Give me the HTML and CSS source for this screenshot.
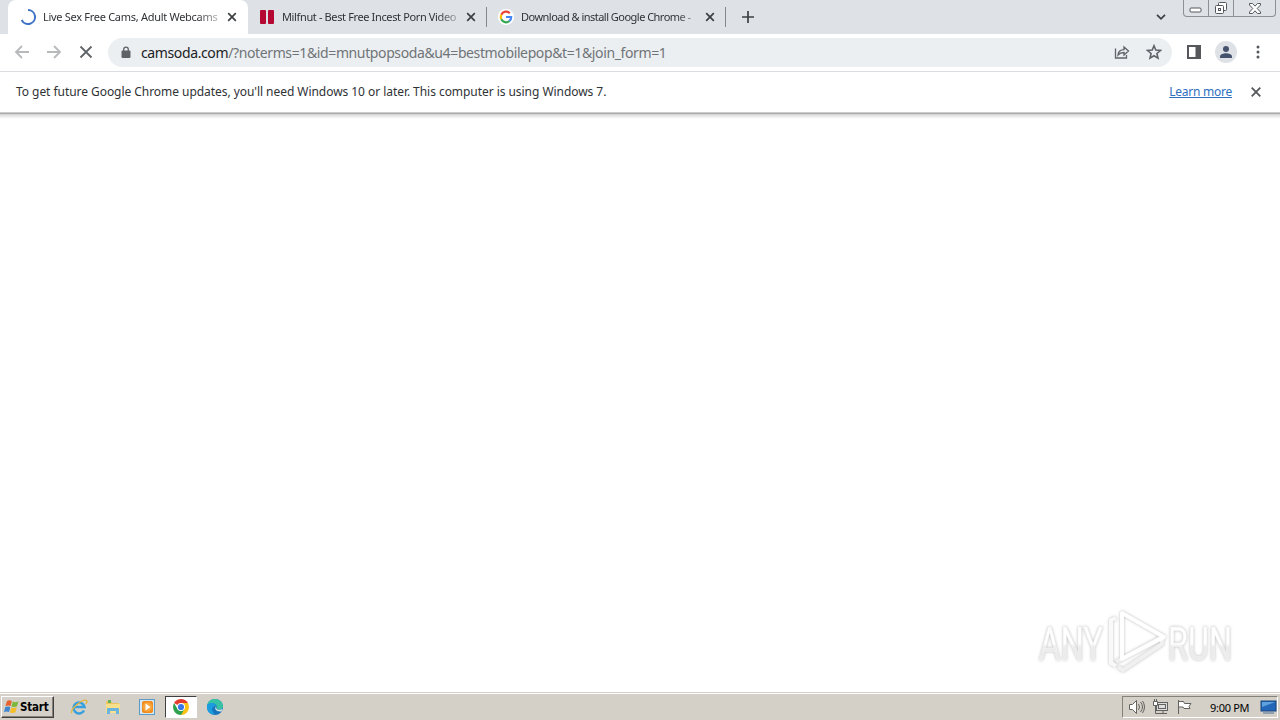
FILE: index.html
```
<!DOCTYPE html>
<html lang="en">
<head>
    <meta charset="utf-8">
    <title>Desktop</title>
    <link rel="stylesheet" href="styles.css">
</head>
<body>
    <div class="tab-strip">
        <div class="tab active">
            <svg class="favicon" viewBox="0 0 16 16"><path d="M8 1a7 7 0 1 1-6.3 10" fill="none" stroke="#3f73c4" stroke-width="2"/></svg>
            <span class="tab-title">Live Sex Free Cams, Adult Webcams</span>
            <svg class="tab-close" viewBox="0 0 10 10"><path d="M1.2 1.2l7.6 7.6M8.8 1.2L1.2 8.8"/></svg>
        </div>
        <div class="tab second">
            <svg class="favicon" viewBox="0 0 16 16"><rect x="1" y="1" width="6" height="14" rx="1" fill="#b50933"/><rect x="9" y="1" width="6" height="14" rx="1" fill="#b50933"/></svg>
            <span class="tab-title">Milfnut - Best Free Incest Porn Video</span>
            <svg class="tab-close" viewBox="0 0 10 10"><path d="M1.2 1.2l7.6 7.6M8.8 1.2L1.2 8.8"/></svg>
        </div>
        <div class="tab third">
            <svg class="favicon" viewBox="0 0 16 16">
                <circle cx="8" cy="8" r="8" fill="#fff"/>
                <g fill="none" stroke-width="2.2">
                    <path d="M11.8 4.2A5.2 5.2 0 0 0 3.3 5.7" stroke="#ea4335"/>
                    <path d="M3.3 5.7a5.2 5.2 0 0 0 0 4.6" stroke="#fbbc05"/>
                    <path d="M3.3 10.3a5.2 5.2 0 0 0 8.1 1.7" stroke="#34a853"/>
                    <path d="M11.4 12A5.2 5.2 0 0 0 13.2 8H8" stroke="#4285f4"/>
                </g>
            </svg>
            <span class="tab-title">Download &amp; install Google Chrome -</span>
            <svg class="tab-close" viewBox="0 0 10 10"><path d="M1.2 1.2l7.6 7.6M8.8 1.2L1.2 8.8"/></svg>
        </div>
        <svg class="new-tab" viewBox="0 0 12 12"><path d="M6 0v12M0 6h12"/></svg>
        <svg class="tab-search" viewBox="0 0 10 6"><path d="M1 .8l4 4 4-4"/></svg>
        <div class="window-buttons">
            <span class="minimize"><svg width="14" height="6"><rect x="1" y="1" width="11" height="4" rx="1"/></svg></span>
            <span class="restore"><svg width="14" height="14"><rect x="4.5" y="1.5" width="8" height="8" rx="1"/><rect x="1.5" y="4.5" width="8" height="8" rx="1"/><rect x="4.5" y="7.5" width="2" height="2"/></svg></span>
            <span class="close"><svg width="12" height="11"><path d="M.5.5h3L6 3.2 8.500.5h3v1.500L8.200 5.500l3.300 3.500v1.500h-3L6 7.800 3.500 10.500h-3V9l3.300-3.500L.5 2z"/></svg></span>
        </div>
    </div>

    <div class="toolbar">
        <svg class="nav back" viewBox="0 0 16 16"><path d="M15 8H2M8 2L2 8l6 6"/></svg>
        <svg class="nav forward" viewBox="0 0 16 16"><path d="M1 8h13M8 2l6 6-6 6"/></svg>
        <svg class="nav stop" viewBox="0 0 16 16"><path d="M2.500 2.500l11 11M13.500 2.500l-11 11"/></svg>
        <div class="omnibox">
            <svg class="lock" viewBox="0 0 10 12"><rect x=".5" y="4" width="9" height="7.500" rx="1" fill="#5f6368"/><path d="M2.700 4.500V3a2.300 2.300 0 0 1 4.600 0v1.500" fill="none" stroke="#5f6368" stroke-width="1.300"/></svg>
            <span class="url"><span class="host">camsoda.com</span><span class="path">/?noterms=1&amp;id=mnutpopsoda&amp;u4=bestmobilepop&amp;t=1&amp;join_form=1</span></span>
            <svg class="share" viewBox="0 0 16 16"><path d="M1.500 4.500v9.500h11v-3"/><path d="M4 11c.4-3.500 2.500-5.200 6-5.300V3l4.500 4-4.500 4V8.500C7.500 8.500 5.500 9.200 4 11z"/></svg>
            <svg class="star" viewBox="0 0 16 16"><path d="M8 1.800l1.800 4.300 4.700.4-3.600 3 1.100 4.600L8 11.700l-4 2.400 1.100-4.600-3.600-3 4.700-.4z"/></svg>
        </div>
        <svg class="side-panel" viewBox="0 0 14 14"><path d="M0 0h14v14H0zM2 2v10h6.500V2z" fill="#55575b" fill-rule="evenodd"/></svg>
        <span class="avatar"><svg viewBox="0 0 14 14"><circle cx="7" cy="4" r="3" fill="#46516e"/><path d="M1 13v-1.500C1 9.500 4.500 8.300 7 8.300s6 1.200 6 3.200V13z" fill="#46516e"/></svg></span>
        <svg class="menu" viewBox="0 0 4 14"><circle cx="2" cy="2" r="1.500"/><circle cx="2" cy="7" r="1.500"/><circle cx="2" cy="12" r="1.500"/></svg>
    </div>

    <div class="infobar">
        <span class="message">To get future Google Chrome updates, you'll need Windows 10 or later. This computer is using Windows 7.</span>
        <a class="learn-more">Learn more</a>
        <svg class="dismiss" viewBox="0 0 10 10"><path d="M.7.7l8.600 8.600M9.300.7L.7 9.300"/></svg>
    </div>

    <div class="page">
        <div class="watermark">
            <svg width="216" height="76" viewBox="0 0 216 76">
                <defs>
                    <linearGradient id="fade" x1="0" y1="0" x2="0" y2="1">
                        <stop offset="0.500" stop-color="#fff"/>
                        <stop offset="0.560" stop-color="#ececec"/>
                    </linearGradient>
                </defs>
                <g fill="url(#fade)">
                    <text x="9" y="55" textLength="64" lengthAdjust="spacingAndGlyphs">ANY</text>
                    <text x="138" y="55" textLength="64" lengthAdjust="spacingAndGlyphs">RUN</text>
                </g>
                <g class="mark">
                    <path d="M86 57l46-25v7L93 65l-5-3" stroke="#f0f0f0"/>
                    <path d="M86 13l-5 2v43l5 3" stroke="#f9f9f9"/>
                    <path d="M92 54V8l42 24z" stroke="#fff"/>
                </g>
            </svg>
        </div>
    </div>

    <div class="taskbar">
        <div class="start">
            <svg viewBox="0 0 16 16"><path d="M3 2c2-1 3-.8 4.800 0L6.600 7C4.800 6.200 3.500 6.200 1.500 7z" fill="#e8602c"/><path d="M8.700 2.500c2 .9 3.500.9 5.800-.2L13 7.200c-2 1-3.700 1-5.500.2z" fill="#7db83a"/><path d="M1.300 8c2-.8 3.400-.8 5 0l-1.200 5c-1.800-.8-3.200-.7-5.100.1z" fill="#3f86cf"/><path d="M7.200 8.400c2 .9 3.600.8 5.600-.1l-1.300 5c-2 .9-3.700 1-5.500.1z" fill="#f5bd27"/></svg>
            <span>Start</span>
        </div>
        <div class="quick-launch">
            <span class="app"><svg viewBox="0 0 18 18"><path d="M14 12.500a5.500 5.500 0 1 1 .5-3.500H4" fill="none" stroke="#38a0dc" stroke-width="2.600"/><path d="M2 15C-1 12 13 0 16.500 2.500c1 .8.2 2.500-.7 3.500" fill="none" stroke="#e5b53b" stroke-width="1.300"/></svg></span>
            <span class="app"><svg viewBox="0 0 18 18"><path d="M2 3h5l1 2h7v9H2z" fill="#e9c45f"/><path d="M4 2h3v3H4z" fill="#66b356"/><path d="M2 6h14v9H2z" fill="#f8df8c"/><path d="M3 16v-5q0-1 1-1h10q1 0 1 1v5h-3v-3H6v3z" fill="#69b3df"/></svg></span>
            <span class="app"><svg viewBox="0 0 18 18"><rect x="1.500" y="1.500" width="15" height="15" fill="#d7e8f4" stroke="#5b9bc8"/><rect x="4" y="3" width="11" height="12" rx="2" fill="#f08b1d"/><circle cx="9.500" cy="9" r="4.800" fill="#f7a53c"/><path d="M7.500 5.500l5 3.500-5 3.500z" fill="#fff"/></svg></span>
            <span class="app pressed"><svg viewBox="0 0 18 18"><path d="M9 9L2.100 5A8 8 0 0 1 15.900 5z" fill="#e33b2e"/><path d="M9 9V5h6.900A8 8 0 0 1 9 17z" fill="#fbc116"/><path d="M2.100 5A8 8 0 0 0 9 17l3.500-6H5.500z" fill="#2da14d"/><circle cx="9" cy="9" r="4" fill="#fff"/><circle cx="9" cy="9" r="3.100" fill="#3b78e7"/></svg></span>
            <span class="app"><svg viewBox="0 0 18 18"><circle cx="9" cy="9" r="8" fill="#1674bd"/><path d="M1.300 7C3-1 16-1 17 8c.3 4-5 4.500-6.500 2.500C12.500 7 7 3 1.300 7z" fill="#38c2a5"/><path d="M1.200 7c3-3.500 9-2 9 1.500-4-1.500-6 4-1.500 7.500C3 17 0 12 1.200 7z" fill="#1c9de0"/><path d="M10.500 8c-1.500 3 2 5 6 3l-1 2.300c-4 1-8.500-2-5-5.300z" fill="#d8e3e3"/></svg></span>
        </div>
        <div class="tray">
            <svg class="speaker" viewBox="0 0 17 16"><path d="M1.500 5.500h3l4-4v13l-4-4h-3z" fill="#fff"/><path d="M10.500 5q2 3 0 6M12.500 3q4 5 0 10M14.500 2q4 6 0 12"/></svg>
            <svg class="network" viewBox="0 0 17 16"><rect x="4.500" y="3.500" width="11" height="8" fill="#dedede"/><rect x="6.500" y="5.500" width="7" height="4"/><path d="M6 14.500h9M11 12v2M3.500 6v8.500H6"/><path d="M1.500 2.500h4v4h-4z" fill="#fff"/><path d="M2.500 0v2M4.500 0v2"/></svg>
            <svg class="flag" viewBox="0 0 17 16"><path d="M2.500 1v14M2.500 2.500h5l1 2h6.500l-2 3 1 2H8l-1-1.500H2.500z" fill="#fff"/></svg>
            <span class="clock">9:00 PM</span>
            <svg class="desktop" viewBox="0 0 17 16"><rect x="1" y="2" width="15" height="10" fill="#2467b8" stroke="#174780"/><path d="M2 3h13L2 8z" fill="#5fa1df"/><path d="M3 14h11" stroke="#7890a6" stroke-width="1.500"/></svg>
        </div>
    </div>
</body>
</html>
```
FILE: styles.css
```
* {
    box-sizing: border-box;
}
body {
    margin: 0;
    width: 1280px;
    height: 720px;
    display: flex;
    flex-direction: column;
    overflow: hidden;
    background: #fff;
    font-family: "Noto Sans", sans-serif;
    font-size: 12px;
    color: #303236;
    white-space: nowrap;
}
svg {
    display: block;
    flex: none;
}
.tab-strip {
    display: flex;
    height: 34px;
    padding-left: 8px;
    background: #dee1e6;
}
.tab {
    display: flex;
    align-items: center;
    height: 34px;
    width: 239px;
    padding: 0 11px;
    border-right: 1px solid transparent;
}
.tab.active {
    width: 240px;
    padding-left: 12px;
    background: #fff;
    border-radius: 8px 8px 0 0;
}
.tab.second,
.tab.third {
    background: linear-gradient(#85888d, #85888d) right 7px / 1px 20px no-repeat;
    background-origin: border-box;
}
.favicon {
    width: 16px;
    height: 16px;
    margin-right: 7px;
}
.tab-title {
    flex: none;
    width: 176px;
    overflow: hidden;
    font-size: 11px;
    line-height: 18px;
    letter-spacing: -0.29px;
    -webkit-mask-image: linear-gradient(90deg, #000 88%, rgba(0, 0, 0, 0.3));
    mask-image: linear-gradient(90deg, #000 88%, rgba(0, 0, 0, 0.3));
}
.second .tab-title {
    letter-spacing: -0.37px;
}
.third .tab-title {
    letter-spacing: -0.52px;
}
.tab-close {
    width: 10px;
    height: 10px;
    margin-left: 8px;
}
.tab-close path,
.new-tab path,
.tab-search path {
    fill: none;
    stroke: #3c4043;
    stroke-width: 1.7;
}
.new-tab {
    width: 12px;
    height: 12px;
    margin: 11px 0 0 16px;
}
.tab-search {
    width: 10px;
    height: 6px;
    margin: 14px 17px 0 auto;
}
.window-buttons {
    display: flex;
    width: 93px;
    height: 17px;
    margin-right: 4px;
    border: 1px solid #8d9097;
    border-top: 0;
    border-radius: 0 0 4px 4px;
}
.window-buttons span {
    display: flex;
    justify-content: center;
    width: 25px;
    border-right: 1px solid #8d9097;
}
.window-buttons .minimize {
    padding-top: 7px;
}
.window-buttons .restore {
    padding-top: 1px;
}
.window-buttons .close {
    flex: 1;
    padding-top: 3px;
    border: 0;
}
.window-buttons svg {
    fill: #fff;
    stroke: #55585f;
}
.toolbar {
    display: flex;
    align-items: center;
    height: 38px;
    padding: 0 19px 1px 14px;
    border-bottom: 1px solid #dadce0;
}
.nav {
    width: 16px;
    height: 16px;
    margin-right: 16px;
    fill: none;
    stroke: #b7b9bb;
    stroke-width: 1.8;
}
.nav.stop {
    margin-right: 14px;
    stroke: #5f6368;
}
.omnibox {
    display: flex;
    align-items: center;
    width: 1064px;
    height: 29px;
    padding: 0 10px 0 13px;
    border-radius: 15px;
    background: #eceff1;
}
.lock {
    width: 10px;
    height: 13px;
}
.url {
    flex: 1;
    margin-left: 10px;
    font-size: 14px;
    letter-spacing: -0.38px;
}
.host {
    color: #202124;
}
.path {
    color: #707478;
}
.share,
.star {
    width: 16px;
    height: 16px;
    fill: none;
    stroke: #5f6368;
    stroke-width: 1.3;
}
.star {
    margin-left: 16px;
    stroke-width: 1.6;
}
.side-panel {
    width: 14px;
    height: 14px;
    margin-left: 15px;
}
.avatar {
    display: flex;
    align-items: center;
    justify-content: center;
    width: 22px;
    height: 22px;
    margin-left: 14px;
    border-radius: 50%;
    background: #dee1e6;
}
.avatar svg {
    width: 14px;
    height: 14px;
}
.menu {
    width: 4px;
    height: 14px;
    margin-left: 19px;
    fill: #55585c;
}
.infobar {
    display: flex;
    align-items: center;
    height: 41px;
    padding: 0 19px 1px 16px;
    border-bottom: 1px solid #ccc;
}
.message {
    flex: 1;
    letter-spacing: -0.05px;
}
.learn-more {
    color: #2e6fc0;
    letter-spacing: -0.25px;
    text-decoration: underline;
}
.dismiss {
    width: 10px;
    height: 10px;
    margin-left: 19px;
    stroke: #55585c;
    stroke-width: 1.8;
}
.page {
    flex: 1;
    display: flex;
    align-items: flex-end;
    justify-content: flex-end;
    padding: 0 34px 11px 0;
    background: linear-gradient(#aaa 1px, #d2d2d2 1px, #f0f0f0 4px, #fff 6px);
}
.watermark text {
    font-family: Roboto, sans-serif;
    font-size: 47px;
    stroke: #f4f4f4;
    stroke-width: 0.5;
}
.watermark svg {
    overflow: visible;
    filter: drop-shadow(0 0 1.5px #bbb);
}
.mark path {
    fill: none;
    stroke-width: 4;
    stroke-linejoin: round;
}
.taskbar {
    display: flex;
    align-items: center;
    height: 28px;
    padding: 1px 2px 0 1px;
    border-top: 1px solid #d4d0c8;
    background: linear-gradient(#fff 1px, #d4d0c8 1px);
}
.start {
    display: flex;
    align-items: center;
    width: 53px;
    height: 22px;
    padding-left: 2px;
    border: 1px solid;
    border-color: #fff #404040 #404040 #fff;
    box-shadow: inset -1px -1px #858279;
    font: bold 11.5px "DejaVu Sans Condensed", "DejaVu Sans", sans-serif;
    letter-spacing: -0.2px;
    color: #000;
}
.start svg {
    width: 16px;
    height: 16px;
}
.quick-launch {
    display: flex;
    gap: 2px;
    margin-left: 9px;
}
.app {
    display: flex;
    align-items: center;
    justify-content: center;
    width: 32px;
    height: 22px;
}
.app svg {
    width: 18px;
    height: 18px;
}
.app.pressed {
    border: 1px solid;
    border-color: #404040 #fff #fff #404040;
    background: #fff;
}
.tray {
    display: flex;
    align-items: center;
    width: 156px;
    height: 22px;
    margin-left: auto;
    padding-left: 5px;
    border: 1px solid;
    border-color: #858279 #fff #fff #858279;
}
.tray svg {
    width: 17px;
    height: 16px;
    margin-right: 7px;
}
.speaker,
.network,
.flag {
    fill: none;
    stroke: #62625f;
}
.clock {
    width: 50px;
    margin-left: 10px;
    font-size: 11px;
    letter-spacing: -0.3px;
    color: #000;
}
.tray .desktop {
    margin-right: 0;
}
```
